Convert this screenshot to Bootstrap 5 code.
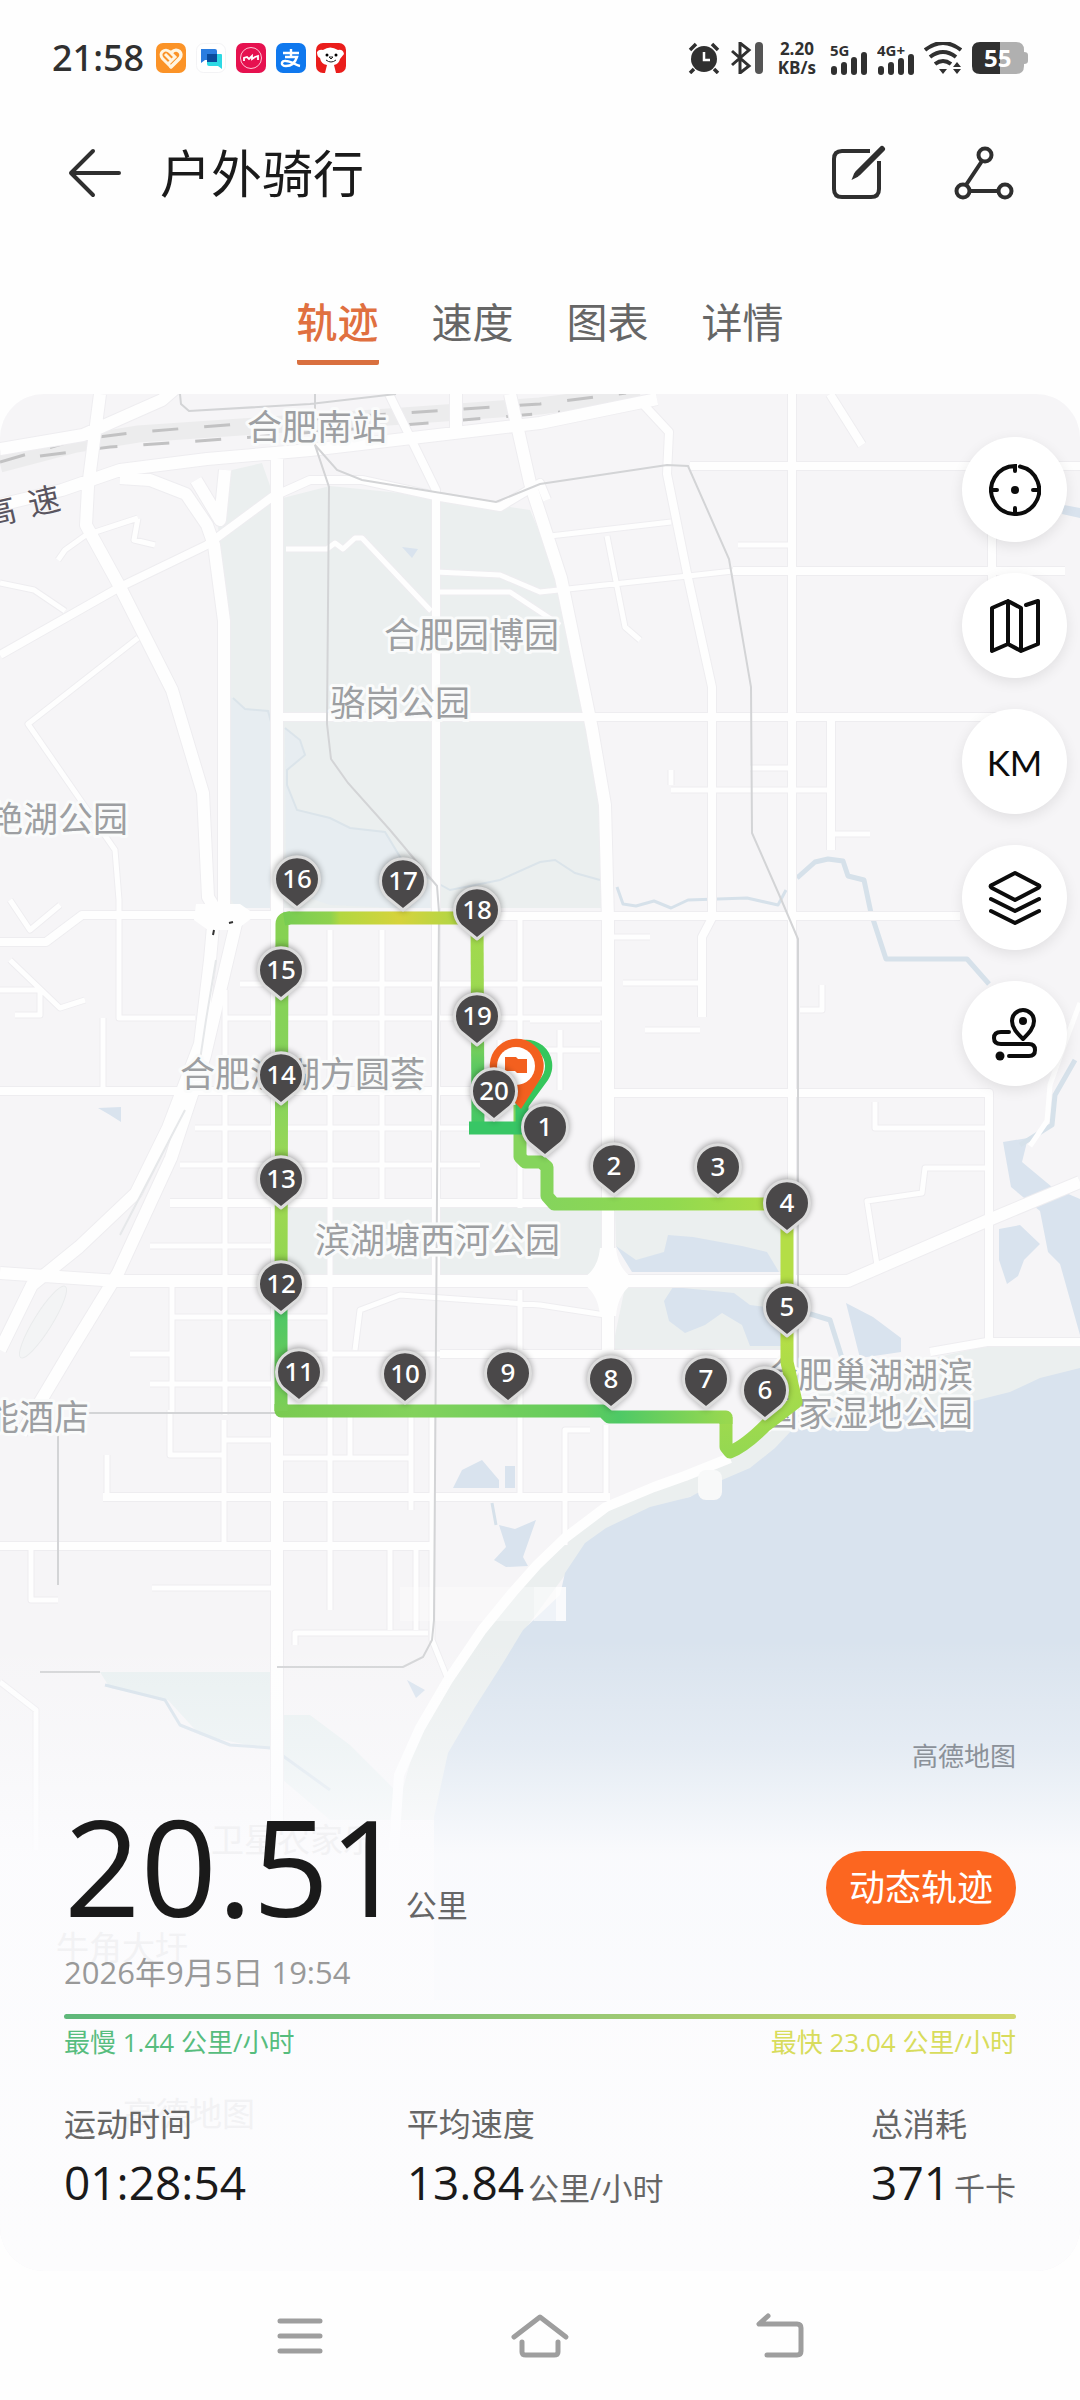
<!DOCTYPE html>
<html lang="zh-CN">
<head>
<meta charset="utf-8">
<meta name="viewport" content="width=device-width, initial-scale=1">
<title>户外骑行</title>
<link href="https://cdn.jsdelivr.net/npm/bootstrap@5.3.0/dist/css/bootstrap.min.css" rel="stylesheet">
<style>
  body { font-family: "Open Sans", "Noto Sans CJK SC", sans-serif; background: #fefefe; color: #1a1a1a; }
  svg { display: block; flex: none; }
  .icon-btn { border: 0; background: none; padding: 0; color: #2f2f2f; }
  .share-btn { margin-left: 68px; }

  .status-bar { height: 115px; padding: 0 52px; color: #303030; }
  .status-set { gap: 10px; }
  .clock { font-size: 36px; line-height: 40px; font-weight: 500; font-family: "Noto Sans", sans-serif; }
  .net-speed { font-size: 17px; line-height: 19px; font-weight: 700; text-align: center; }
  .sig-text { font: 700 15px "Open Sans", sans-serif; fill: #303030; }
  .bat-text { font: 700 24px "Open Sans", sans-serif; fill: #fff; }

  .title-bar { height: 116px; padding: 0 66px 0 68px; }
  .page-title { font-size: 51px; line-height: 60px; font-weight: 400; margin-left: 38px; }

  .track-tabs { gap: 53px; padding: 61px 0 29px; }
  .track-tabs .nav-link { font-size: 41px; line-height: 60px; padding: 0 0 8px; color: #666; border-bottom: 5px solid transparent; border-radius: 2px; }
  .track-tabs .nav-link.active { color: #e07040; border-bottom-color: #d9703f; font-weight: 500; }

  .map-panel { border-radius: 44px; overflow: hidden; background: #fcfcfd; }
  .map-canvas { position: absolute; inset: 0; width: 100%; height: 100%; }
  .map-label { font: 400 35px "Noto Sans CJK SC", sans-serif; fill: #9d9fa2; stroke: #fafbfb; stroke-width: 6px; stroke-linejoin: round; paint-order: stroke; }
  .map-highway { font: 400 32px "Noto Sans CJK SC", sans-serif; fill: #5a5560; }
  .map-ghost { font: 400 33px "Noto Sans CJK SC", sans-serif; fill: #f2f2f4; }
  .pin-num { font: 500 26px "Noto Sans", sans-serif; fill: #fff; text-anchor: middle; }

  .map-tools { gap: 31px; padding: 43px 13px 0 0; }
  .tool-btn { width: 105px; height: 105px; border: 0; border-radius: 50%; background: #fff; color: #0c0c0c; box-shadow: 0 4px 14px rgba(0,0,0,.09); padding: 0; }
  .tool-km { font-family: Lato, sans-serif; font-size: 35px; line-height: 40px; }

  .ride-info { padding: 0 64px 59px; }
  .map-credit { font-size: 26px; line-height: 32px; color: #8b9199; margin-bottom: 33px; }
  .distance { font-size: 134px; line-height: 120px; }
  .unit { font-size: 31px; line-height: 40px; color: #666; }
  .play-btn { width: 190px; height: 74px; border-radius: 37px; padding: 0; font-size: 36px; line-height: 74px; color: #fff; background: #fc6620; border: 0; }
  .ride-date { font-size: 31px; line-height: 40px; color: #999; margin: 27px 0 22px; }
  .speed-scale { height: 5px; border-radius: 3px; background: linear-gradient(90deg, #5fb87a, #86c377 40%, #d2d86c); }
  .speed-ends { font-size: 26px; line-height: 32px; padding-top: 7px; margin-bottom: 46px; }
  .slowest { color: #57bd7e; }
  .fastest { color: #d8dc5c; }
  .ride-stats { display: grid; grid-template-columns: 36% 1fr auto; }
  .stat-name { font-size: 32px; line-height: 40px; color: #666; margin-bottom: 8px; font-weight: 400; }
  .stat-value { font-size: 46px; line-height: 60px; margin: 0; }

  .system-nav { height: 129px; gap: 180px; color: #9e9e9e; }
  .system-nav .icon-btn { color: inherit; width: 60px; }
</style>
</head>
<body>
<div class="d-flex flex-column min-vh-100">

  <div class="status-bar d-flex align-items-center justify-content-between">
    <div class="d-flex align-items-center">
      <span class="clock">21:58</span>
      <div class="status-set d-flex ms-2 ps-1">
        <svg width="30" height="30" viewBox="0 0 30 30"><rect width="30" height="30" rx="7" fill="#fb9327"/><path d="M15 24L6.500 15.500C2 10 9 4 14 9l5 5-6 6M14 9l-1-1M9 11l6 6" fill="none" stroke="#fff5e2" stroke-width="3"/><path d="M15 24l8.500-8.500C28 10 21 4 16 9" fill="none" stroke="#fff5e2" stroke-width="3.500" stroke-linecap="round"/></svg>
        <svg width="30" height="30" viewBox="0 0 30 30"><rect x=".5" y=".5" width="29" height="29" rx="7" fill="#fff" stroke="#f3f3f5"/><path d="M5 6h14q2 0 2 2v9H9l-4 3z" fill="#2b7de0"/><path d="M11 11h14q1 0 1 1v14l-4-3H13q-2 0-2-2z" fill="#2dd9e4"/><path d="M11 11h10v8H11z" fill="#0b4b9c"/></svg>
        <svg width="30" height="30" viewBox="0 0 30 30"><rect width="30" height="30" rx="7" fill="#e6114f"/><circle cx="15" cy="15" r="10.500" fill="none" stroke="#ffc4d4"/><path d="M8 18v-3l3-1 2 2 3-3v3l3-2 3-1v4" fill="none" stroke="#fff" stroke-width="1.800"/></svg>
        <svg width="30" height="30" viewBox="0 0 30 30"><rect width="30" height="30" rx="7" fill="#0f78ee"/><path d="M7 10h16M15 6v8M9 14h12c-2 6-6 9-11 9-6 0-5-6 0-5 5 0 9 4 14 5" fill="none" stroke="#fff" stroke-width="2.400"/></svg>
        <svg width="30" height="30" viewBox="0 0 30 30"><rect width="30" height="30" rx="7" fill="#ea1d1b"/><path d="M1 9q2-3 6-2 7-5 15 0 5-1 6 4l-4 5q-1 5-6 6l2 8H9l2-8q-6-1-7-7-3-1-3-6z" fill="#fff"/><circle cx="11" cy="12" r="1.500"/><circle cx="20" cy="12" r="1.500"/><path d="M13 14h4l-2 2zM10 17q5 4 10 0" stroke="#222" fill="none"/></svg>
      </div>
    </div>
    <div class="status-set d-flex align-items-center">
      <svg width="32" height="32" viewBox="0 0 32 32"><circle cx="16" cy="17" r="13" fill="#303030"/><path d="M2 8l6-6M24 2l6 6M6 27l-4 4M26 27l4 4" stroke="#303030" stroke-width="3.500"/><path d="M16 10v8h6" fill="none" stroke="#fff" stroke-width="2.500"/></svg>
      <svg width="34" height="32" viewBox="0 0 34 32"><path d="M2 9l17 15-9 7V1l9 7L2 23" fill="none" stroke="#303030" stroke-width="3"/><rect x="25" y="0" width="8" height="32" rx="4" fill="#555"/></svg>
      <div class="net-speed ms-1">2.20<br>KB/s</div>
      <svg class="ms-1" width="37" height="36" viewBox="0 0 37 36"><text class="sig-text" x="0" y="16">5G</text><path d="M4 29v3M14 25v7M24 20v12M34 15v17" stroke="#303030" stroke-width="6" stroke-linecap="round"/></svg>
      <svg width="37" height="36" viewBox="0 0 37 36"><text class="sig-text" x="0" y="16">4G+</text><path d="M4 29v3M14 25v7M24 21v11M34 17v15" stroke="#303030" stroke-width="6" stroke-linecap="round"/></svg>
      <svg width="38" height="32" viewBox="0 0 38 32"><path d="M1 8q18-14 36 0M6 15q13-10 26 0M11 22q8-6 16 0" fill="none" stroke="#303030" stroke-width="4"/><path d="M15 27h8l-4 5zM29 25l4-5 4 5zM29 27h8l-4 5z" fill="#303030"/></svg>
      <svg width="56" height="32" viewBox="0 0 56 32"><path d="M28 0h16q8 0 8 8v2q4 0 4 3v6q0 3-4 3v2q0 8-8 8H28z" fill="#b0b0b0"/><path d="M28 0H8Q0 0 0 8v16q0 8 8 8h20z" fill="#303030"/><text class="bat-text" x="12" y="25">55</text></svg>
    </div>
  </div>

  <header class="title-bar d-flex align-items-center">
    <button type="button" class="icon-btn" aria-label="返回"><svg width="54" height="50" viewBox="0 0 54 50" fill="none" stroke="currentColor" stroke-width="4" stroke-linecap="round" stroke-linejoin="round"><path d="M51 25H3M25 3L3 25l22 22"/></svg></button>
    <h1 class="page-title mb-0 me-auto">户外骑行</h1>
    <button type="button" class="icon-btn" aria-label="编辑"><svg width="56" height="56" viewBox="0 0 56 56" fill="none" stroke="currentColor"><path d="M40 6H12Q4 6 4 14v30q0 8 8 8h29q8 0 8-8V16" stroke-width="4"/><path d="M52 4L28 28" stroke-width="6" stroke-linecap="round"/><path d="M24.500 27.500l4 4-7 3.500z" fill="currentColor" stroke="none"/></svg></button>
    <button type="button" class="icon-btn share-btn" aria-label="分享"><svg width="60" height="56" viewBox="0 0 60 56" fill="none" stroke="currentColor" stroke-width="4"><circle cx="31" cy="10" r="6.500"/><circle cx="9" cy="46" r="6.500"/><circle cx="51" cy="46" r="6.500"/><path d="M28 16L12 40M16 46h28"/></svg></button>
  </header>

  <nav class="nav track-tabs justify-content-center">
    <a class="nav-link active" aria-current="page" href="#">轨迹</a>
    <a class="nav-link" href="#">速度</a>
    <a class="nav-link" href="#">图表</a>
    <a class="nav-link" href="#">详情</a>
  </nav>

  <main class="map-panel position-relative flex-grow-1 d-flex flex-column justify-content-between">
    <svg class="map-canvas" viewBox="0 394 1080 1877" preserveAspectRatio="xMidYMin slice" role="img" aria-label="骑行轨迹地图">
      <defs>
        <linearGradient id="fade" x1="0" y1="1640" x2="0" y2="2271" gradientUnits="userSpaceOnUse">
          <stop offset="0" stop-color="#fdfdfe" stop-opacity="0"/><stop offset=".17" stop-color="#fbfcfe" stop-opacity=".35"/>
          <stop offset=".34" stop-color="#fcfcfe" stop-opacity=".92"/><stop offset="1" stop-color="#fcfcfd" stop-opacity="1"/>
        </linearGradient>
        <linearGradient id="rTop" x1="282" y1="0" x2="477" y2="0" gradientUnits="userSpaceOnUse"><stop offset="0" stop-color="#76cc52"/><stop offset=".25" stop-color="#8fd24e"/><stop offset=".3" stop-color="#b3d740"/><stop offset=".6" stop-color="#d6d33c"/><stop offset="1" stop-color="#a5d648"/></linearGradient>
        <linearGradient id="rLeft" x1="0" y1="918" x2="0" y2="1411" gradientUnits="userSpaceOnUse"><stop offset="0" stop-color="#86d152"/><stop offset=".35" stop-color="#86d35c"/><stop offset=".55" stop-color="#a0d953"/><stop offset=".75" stop-color="#8fd550"/><stop offset=".8" stop-color="#4ec765"/><stop offset="1" stop-color="#7dce55"/></linearGradient>
        <linearGradient id="rBot" x1="281" y1="0" x2="726" y2="0" gradientUnits="userSpaceOnUse"><stop offset="0" stop-color="#7acb51"/><stop offset=".3" stop-color="#83d25c"/><stop offset=".68" stop-color="#62cb5c"/><stop offset=".76" stop-color="#4ec966"/><stop offset="1" stop-color="#98d84f"/></linearGradient>
        <linearGradient id="rMid" x1="0" y1="918" x2="0" y2="1128" gradientUnits="userSpaceOnUse"><stop offset="0" stop-color="#a4da4a"/><stop offset=".5" stop-color="#98d855"/><stop offset=".7" stop-color="#5fc961"/><stop offset="1" stop-color="#44c865"/></linearGradient>
        <linearGradient id="rEast" x1="547" y1="0" x2="787" y2="0" gradientUnits="userSpaceOnUse"><stop offset="0" stop-color="#85d45c"/><stop offset=".5" stop-color="#90d950"/><stop offset="1" stop-color="#b2dd45"/></linearGradient>
        <linearGradient id="rSouth" x1="0" y1="1340" x2="0" y2="1450" gradientUnits="userSpaceOnUse"><stop offset="0" stop-color="#b4de46"/><stop offset="1" stop-color="#96d851"/></linearGradient>
        <filter id="soft" x="-40%" y="-40%" width="180%" height="180%"><feGaussianBlur stdDeviation="3"/></filter>
        <g id="pin">
          <path d="M0 2L-17-13A24 24 0 1 1 17-13Z" fill="#000" opacity=".35" filter="url(#soft)"/>
          <path d="M0 0L-16-13A22.500 22.500 0 1 1 16-13Z" fill="#4a4849" stroke="#dcdcdc" stroke-width="3" stroke-linejoin="round"/>
        </g>
        <path id="rdMajor" d="M100 394L88 487L86 525L120 587L172 690L203 793L208 897L218 914M0 505L62 490L120 470L207 459L310 450L540 423L657 399M0 449L83 435L162 400L185 380M120 478L150 480L186 494L207 525L214 545L224 621L224 912M277 455V1870M510 394L530 483L561 578L592 729L605 805L608 920V1350M456 394V428M214 915L210 960L200 1044L168 1128L136 1193L79 1247L32 1285L0 1350M238 915L225 970L205 1055L171 1158L118 1273L71 1350L21 1434M196 480L220 520L225 470M0 1273L118 1281H848L991 1219L1080 1182"/>
        <path id="rdMid" d="M0 655L120 587L207 545L272 497L310 480L362 480L440 497L500 507L540 483L547 500M389 394L436 490V1283M282 717H1010M690 466H1080M792 394V1410M277 916H960M0 942H46L82 915H277M607 1093H989V1345M0 1091H520M170 1203H605M733 571H1065M831 720V850M1080 1342H987L930 1352M440 1354H790M643 404L669 432L667 474L688 578L712 687V918L702 937V1017M0 1546H432M103 1497H610M830 394L862 445M992 500V640"/>
        <path id="rdMin" d="M286 549H327L335 543L343 549L355 538H362L431 611M436 572L500 575L540 592L688 576L733 571M436 592H510L560 625M550 536L671 522M607 536L625 627L640 640M671 790H828M623 983H702M671 770V785M608 937H650M0 583L34 590L65 611M58 560L65 550L86 535L138 518M138 518L134 540L155 545M138 638L28 724L115 850L119 900V1018H195M28 780M103 1018V1091M225 990V1415M330 930V1610M382 930V1200M520 920V1208M520 1290V1497M240 984H605M225 1018H605M195 1128H470M180 1165H480M150 1246H280M170 1317H330M130 1354H170M277 1354H605M150 1384H330M172 1285V1413M224 1420V1546M411 1411V1510M565 1545V1430H590M606 1425V1495M107 1455V1497M152 1588H277M390 1548V1630M416 1548V1630M295 1645V1633H428M31 1548V1600H58M432 1410V1640L447 1677M0 1682L36 1710V1850M355 1350L360 1310L400 1295L540 1305L605 1315M500 1040V1090M530 1020H600M560 1030V1090M530 1050H600M991 1168L925 1168L922 1193L867 1201L877 1265M875 1102V1128H985M10 900L30 930L60 905M10 960L60 1008L85 1000M0 990H40V1015H15M225 1440H277M350 1411V1458M277 1458H410M170 1410V1455H225M645 1030H700M800 1010H822V985M738 545H790M833 834H870M750 768H790"/>
        <path id="rdCoast" d="M730 1458L685 1476L654 1487L606 1507L565 1538L537 1565L513 1592L482 1630L448 1680L420 1728L399 1775L394 1850"/>
      </defs>
      <rect y="394" width="1080" height="1877" fill="#f6f5f7"/>

      <!-- parks -->
      <g fill="#ebefef">
        <path d="M216 492L232 470L262 463L275 500L330 486L440 497L530 510L564 588L592 729L604 795L607 908H231V640L219 540Z"/>
        <path d="M288 1206H605V1275H288ZM615 1211H787V1272H640L616 1246ZM625 1287H785V1350H612Z"/>
        <path d="M730 1460L800 1400L880 1370L987 1346H1080V1380L970 1405L830 1425L775 1460L722 1486L650 1510L606 1535L565 1575L523 1632L475 1709L434 1820H394L420 1728L482 1630L537 1565L606 1507Z"/>
        <path d="M100 1672H272V1750L200 1735L168 1700L110 1688ZM283 1715H310L350 1745L395 1790L390 1820H330L283 1780Z" fill="#e9f0f1"/>
      </g>
      <path d="M231 697L245 710H271V908H237L231 900ZM285 728L300 740L305 755L287 770V785L297 810L330 818L350 828L385 832L405 865L430 885V908H395L330 905L286 890Z" fill="#e7edf1"/>
      <path d="M233 698L245 709L268 711L271 722M285 728L300 740L305 755L287 770V785L297 810L330 818L350 828L385 832L405 865L450 890L500 880L540 862L555 860L575 873L600 880" fill="none" stroke="#dbe4ea" stroke-width="2"/>

      <!-- water -->
      <g fill="#d9e3ee">
        <path d="M1080 1368L1040 1378L1010 1392L970 1402L830 1418L791 1431L775 1448L750 1468L722 1480L690 1497L650 1507L606 1528L585 1543L565 1573L560 1595L523 1630L503 1663L475 1707L448 1753L434 1817V2000H1080Z"/>
        <path d="M616 1246L636 1260L664 1252L668 1235L693 1237L742 1246L767 1252L779 1272H632ZM673 1287L734 1293L750 1305L783 1309V1346H750L742 1325L722 1313L705 1325L685 1333L669 1321L664 1301Z"/>
        <path d="M846 1303L873 1317L901 1338V1352L860 1358ZM1003 1142L1028 1138L1022 1162L1052 1187L1080 1199V1335L1060 1264L1048 1252L1040 1211L1011 1187ZM999 1229L1020 1225L1040 1244L1024 1260L1018 1276L1007 1284L999 1260Z"/>
        <path d="M453 1488L462 1470L482 1460L499 1480V1488ZM505 1466H515V1488H505ZM499 1525L515 1529L536 1520L523 1557L528 1566L506 1567L494 1560L506 1547ZM407 1680L425 1690L416 1698ZM98 1108L121 1107V1122L110 1115ZM1064 505L1080 508V518L1062 514ZM402 547L418 549L412 558Z"/>
      </g>
      <g fill="none" stroke="#d6e1ea" stroke-linejoin="round">
        <path d="M797 878L815 862L828 859L843 861L848 876L864 880L871 913L886 959H967L989 984M807 1313L830 1320L842 1358M1075 1060L1055 1095L1052 1125L1020 1145" stroke-width="5"/>
        <path d="M617 887L623 904L636 906L654 901L671 908L688 900L747 898L778 905L786 890M492 1503L496 1525M105 1685L165 1700L180 1725L230 1745L272 1748L330 1790" stroke-width="3"/>
      </g>

      <!-- railway -->
      <path d="M0 464L76 444L138 434L241 427L403 416L540 406L640 393" fill="none" stroke="#ececed" stroke-width="17"/>
      <path d="M0 462L76 440L138 432L241 424L403 413L540 404L626 393M40 456L110 447L241 438L403 425L560 412" fill="none" stroke="#c2c2c3" stroke-width="3" stroke-dasharray="26 26"/>

      <!-- roads -->
      <g fill="none" stroke-linejoin="round">
        <g stroke="#eeedf0"><use href="#rdMin" stroke-width="7"/><use href="#rdMid" stroke-width="10"/><use href="#rdMajor" stroke-width="14"/></g>
        <g stroke="#fefefe"><use href="#rdMin" stroke-width="5"/><use href="#rdMid" stroke-width="8"/><use href="#rdMajor" stroke-width="12"/><use href="#rdCoast" stroke-width="10"/></g>
        <path d="M1080 1003L1066 1040L1050 1085L1047 1121L1030 1146" stroke="#fefefe" stroke-width="5"/>
        <path d="M216 960L206 1020L200 1060M185 1110L120 1235" stroke="#e6e8ea" stroke-width="2"/>
        <ellipse cx="43" cy="1322" rx="9" ry="42" transform="rotate(32 43 1322)" fill="#f3f4f5" stroke="#e9ebec"/>
      </g>
      <g fill="#fefefe"><path d="M578 1281Q598 1272 600 1248H616Q618 1272 638 1281Q618 1290 616 1316H600Q598 1290 578 1281ZM196 904H240L256 915L236 930H208L194 920Z"/><rect x="400" y="1587" width="166" height="34" opacity=".3"/><rect x="534" y="1587" width="22" height="34" opacity=".4"/><rect x="556" y="1587" width="10" height="34" opacity=".8"/><rect x="698" y="1470" width="24" height="30" rx="8" fill="#f8f9f9"/></g>
      <path d="M229 923l4-1M213 935l1-5" stroke="#333" stroke-width="2"/>

      <!-- metro lines -->
      <path d="M315 394V445L329 487L327 724L331 759L348 783L390 830L437 886L439 912L434 1620L432 1640L423 1657L403 1667H277M315 445L337 470L362 480L496 502L540 484L667 465L688 466L729 559L751 687L752 833L781 899L798 939V1404M180 394L181 404L189 411L310 404L396 394M87 1413H280M58 1430V1585M40 1672H100M600 1413H730" fill="none" stroke="#d3d4d6" stroke-width="2"/>

      <!-- place names -->
      <g class="map-label">
        <text x="247" y="440">合肥南站</text><text x="384" y="648">合肥园博园</text><text x="330" y="716">骆岗公园</text>
        <text x="-12" y="832">艳湖公园</text><text x="180" y="1087">合肥滨湖方圆荟</text><text x="315" y="1253">滨湖塘西河公园</text>
        <text x="763" y="1388">合肥巢湖湖滨</text><text x="763" y="1426">国家湿地公园</text><text x="-16" y="1430">能酒店</text>
      </g>
      <g class="map-highway"><text x="-13" y="527" transform="rotate(-13 -13 527)">高</text><text x="31" y="516" transform="rotate(-13 31 516)">速</text></g>

      <rect y="1640" width="1080" height="631" fill="url(#fade)"/>
      <g class="map-ghost"><text x="211" y="1852">卫星农家乐</text><text x="56" y="1960">牛角大圩</text><text x="123" y="2126">高德地图</text></g>

      <!-- track -->
      <g fill="none" stroke-width="13" stroke-linejoin="round">
        <path d="M787 1204V1362L796 1402L766 1425Q745 1446 730 1452L726 1447V1417" stroke="url(#rSouth)"/>
        <path d="M726 1424V1417H609L603 1411H281V1404" stroke="url(#rBot)"/>
        <path d="M281 1411V1300L282 924Q282 918 290 918" stroke="url(#rLeft)"/>
        <path d="M284 919L290 918H477V919" stroke="url(#rTop)"/>
        <path d="M477 918L478 1128" stroke="url(#rMid)"/>
        <path d="M520 1105V1157L525 1162H541L547 1167V1196L554 1204H787" stroke="url(#rEast)"/>
        <path d="M469 1128H522V1095" stroke="#38c665"/>
      </g>
      <path d="M526 1110L506 1082A26 26 0 1 1 548 1080Z" fill="#35c65c"/><circle cx="526" cy="1066" r="19" fill="#fff"/>
      <path d="M521 1109L496 1083A27 27 0 1 1 539 1081Z" fill="#f3601f"/><circle cx="516" cy="1066" r="19" fill="#fff"/>
      <path d="M505 1057h11l2 2h9v14h-10l-2-2h-10z" fill="#f3601f"/>

      <g><use href="#pin" x="477" y="939"/><use href="#pin" x="477" y="1045"/><use href="#pin" x="494" y="1120"/><use href="#pin" x="545" y="1156"/><use href="#pin" x="614" y="1195"/><use href="#pin" x="718" y="1196"/><use href="#pin" x="787" y="1232"/><use href="#pin" x="787" y="1336"/><use href="#pin" x="765" y="1419"/><use href="#pin" x="706" y="1408"/><use href="#pin" x="611" y="1408"/><use href="#pin" x="508" y="1402"/><use href="#pin" x="405" y="1403"/><use href="#pin" x="299" y="1401"/><use href="#pin" x="281" y="1313"/><use href="#pin" x="281" y="1208"/><use href="#pin" x="281" y="1104"/><use href="#pin" x="281" y="999"/><use href="#pin" x="297" y="908"/><use href="#pin" x="403" y="910"/></g>
      <g class="pin-num"><text x="545" y="1136">1</text><text x="614" y="1175">2</text><text x="718" y="1176">3</text><text x="787" y="1212">4</text><text x="787" y="1316">5</text><text x="765" y="1399">6</text><text x="706" y="1388">7</text><text x="611" y="1388">8</text><text x="508" y="1382">9</text><text x="405" y="1383">10</text><text x="299" y="1381">11</text><text x="281" y="1293">12</text><text x="281" y="1188">13</text><text x="281" y="1084">14</text><text x="281" y="979">15</text><text x="297" y="888">16</text><text x="403" y="890">17</text><text x="477" y="919">18</text><text x="477" y="1025">19</text><text x="494" y="1100">20</text></g>
    </svg>

    <div class="map-tools position-relative d-flex flex-column align-items-end">
      <button type="button" class="tool-btn d-flex align-items-center justify-content-center" aria-label="定位"><svg width="52" height="52" viewBox="0 0 52 52" fill="none" stroke="currentColor" stroke-width="4" stroke-linecap="round"><path d="M26 7V2A24 24 0 1 0 31 2.500M2 26h6M50 26h-6M26 50v-6"/><circle cx="26" cy="26" r="4" fill="currentColor" stroke="none"/></svg></button>
      <button type="button" class="tool-btn d-flex align-items-center justify-content-center" aria-label="地图类型"><svg width="52" height="56" viewBox="0 0 52 56" fill="none" stroke="currentColor" stroke-width="4" stroke-linejoin="round" stroke-linecap="round"><path d="M3 10l16-7 13 7v43l-13-7-16 7zM19 3v43M37 7l12-4v43l-17 7"/></svg></button>
      <button type="button" class="tool-btn tool-km" aria-label="公里标记">KM</button>
      <button type="button" class="tool-btn d-flex align-items-center justify-content-center" aria-label="图层"><svg width="54" height="56" viewBox="0 0 54 56" fill="none" stroke="currentColor" stroke-width="4" stroke-linejoin="round" stroke-linecap="round"><path d="M27 3l23 12q3 1 0 3L27 30 4 18q-3-2 0-3zM3 29l24 12 24-12M3 41l24 12 24-12"/></svg></button>
      <button type="button" class="tool-btn d-flex align-items-center justify-content-center" aria-label="路线"><svg width="46" height="54" viewBox="0 0 46 54" fill="none" stroke="currentColor" stroke-width="4" stroke-linejoin="round" stroke-linecap="round"><path d="M31 32C25 26 20 21 20 14a11 11 0 0 1 22 0c0 7-5 12-11 18zM17 25H9q-7 0-7 6t7 6h28q6 0 6 6t-6 6H17"/><circle cx="31" cy="14" r="4" fill="currentColor" stroke="none"/><circle cx="8" cy="49" r="4.500" fill="currentColor" stroke="none"/></svg></button>
    </div>

    <section class="ride-info position-relative">
      <div class="map-credit text-end">高德地图</div>
      <div class="d-flex align-items-end justify-content-between">
        <div class="d-flex align-items-baseline"><span class="distance">20.51</span><span class="unit">公里</span></div>
        <button type="button" class="play-btn btn">动态轨迹</button>
      </div>
      <div class="ride-date">2026年9月5日 19:54</div>
      <div class="speed-scale"></div>
      <div class="speed-ends d-flex justify-content-between"><span class="slowest">最慢 1.44 公里/小时</span><span class="fastest">最快 23.04 公里/小时</span></div>
      <div class="ride-stats">
        <div><h2 class="stat-name">运动时间</h2><p class="stat-value">01:28:54</p></div>
        <div><h2 class="stat-name">平均速度</h2><p class="stat-value">13.84<span class="unit ms-1">公里/小时</span></p></div>
        <div><h2 class="stat-name">总消耗</h2><p class="stat-value">371<span class="unit ms-1">千卡</span></p></div>
      </div>
    </section>
  </main>

  <div class="system-nav d-flex align-items-center justify-content-center">
    <button type="button" class="icon-btn" aria-label="最近任务"><svg class="mx-auto" width="46" height="40" viewBox="0 0 46 40" stroke="currentColor" stroke-width="5" stroke-linecap="round"><path d="M3 5h40M3 20h40M3 35h40"/></svg></button>
    <button type="button" class="icon-btn" aria-label="主页"><svg class="mx-auto" width="60" height="46" viewBox="0 0 60 46" fill="none" stroke="currentColor" stroke-width="5" stroke-linecap="round" stroke-linejoin="round"><path d="M4 24L30 4l26 20M12 29v10q0 3 4 3h28q4 0 4-3V29"/></svg></button>
    <button type="button" class="icon-btn" aria-label="返回上级"><svg class="mx-auto" width="52" height="46" viewBox="0 0 52 46" fill="none" stroke="currentColor" stroke-width="5" stroke-linecap="round" stroke-linejoin="round"><path d="M14 3L5 11h38q4 0 4 4v23q0 4-4 4H13"/></svg></button>
  </div>
</div>
<script src="https://cdn.jsdelivr.net/npm/bootstrap@5.3.0/dist/js/bootstrap.bundle.min.js"></script>
</body>
</html>
